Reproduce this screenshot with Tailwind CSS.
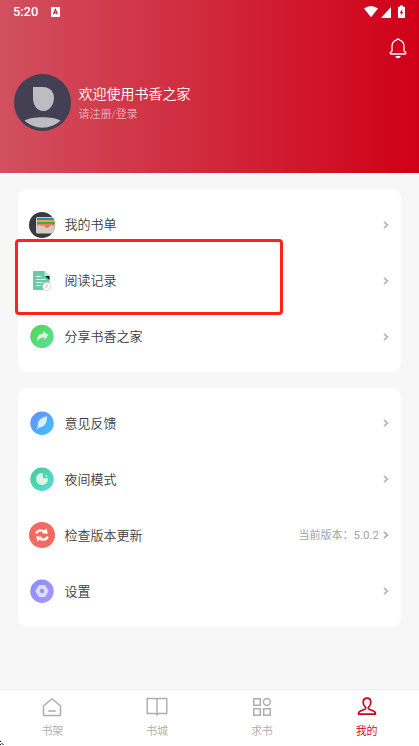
<!DOCTYPE html>
<html lang="zh-CN">
<head>
<meta charset="utf-8">
<title>书香之家</title>
<script src="https://cdn.jsdelivr.net/npm/@tailwindcss/browser@4"></script>
</head>
<body class="relative flex h-[746px] w-[419px] flex-col overflow-hidden bg-[#f7f7f7] font-['Roboto','Noto_Sans_CJK_SC',sans-serif] font-[350] text-[#3c3c40]">

<header class="h-[173px] shrink-0 bg-linear-to-r/srgb from-[#d1505f] to-[#d00018] text-white">
  <div class="flex h-[23px] items-center pl-[13px] pr-[14px]">
    <span class="w-[25.500px] text-[13px] leading-[23px] font-medium tracking-[-0.1px]">5:20</span>
    <svg class="ml-[12.500px]" width="9" height="10" viewBox="0 0 9 10"><rect width="9" height="10" rx="1" fill="#fff"/><path d="M2.300 7.300 4.400 2.500 6.500 7.300M3.100 5.800h2.700" fill="none" stroke="#b92a40" stroke-width="1.200"/></svg>
    <svg class="ml-auto" width="41" height="14" viewBox="0 0 41 14">
      <path d="M0 3.600Q7 -1.600 14 3.600L7 12.300Z" fill="#fff"/>
      <path d="M27 2v11H17Z" fill="#fff"/>
      <path d="M36 .5h3v1.200h1.500a.5.5 0 0 1 .5.5v10.300a.5.5 0 0 1-.5.5h-6a.5.5 0 0 1-.5-.5V2.200a.5.5 0 0 1 .5-.5H36Z" fill="#fff"/>
      <path d="M38.300 4 35.600 8h1.700l-.6 3 2.700-4.200h-1.700Z" fill="#d00b21"/>
    </svg>
  </div>
  <div class="flex justify-end pt-[14px] pr-[12px]">
    <svg width="18" height="23" viewBox="0 0 18 23" fill="none" stroke="#fff" stroke-width="1.300" stroke-linejoin="round">
      <path d="M7.300 3.200a1.800 1.800 0 0 1 3.400 0C13.500 4.200 15 6.500 15 9.300v4.500c.2.900 1.800.8 1.800 2.200 0 .6-.3 1-1 1H2.200c-.7 0-1-.4-1-1 0-1.400 1.600-1.300 1.800-2.200V9.300c0-2.800 1.500-5.100 4.300-6.100Z"/>
      <path d="M6.500 19h5c0 3-5 3-5 0Z" fill="#fff" stroke="none"/>
    </svg>
  </div>
  <div class="mt-[14px] flex h-[57px] items-center pl-[14px]">
    <svg width="57" height="57" viewBox="0 0 57 57"><circle cx="28.500" cy="28.500" r="28.500" fill="#434054"/><path d="M19 13h10c7 0 11 5 11 11s-4 13-10.500 13S19 31 19 24Z" fill="#bdbcc3"/><path d="M10.500 46.500C18 42 39 42 46.500 46.500 37 56 20 56 10.500 46.500Z" fill="#bdbcc3"/></svg>
    <div class="ml-[7.500px] pt-[2px]">
      <div class="text-[14px] leading-[21px]">欢迎使用书香之家</div>
      <div class="text-[11px] leading-[19px] text-white/60">请注册/登录</div>
    </div>
  </div>
</header>

<main class="flex flex-1 flex-col gap-4 px-[18px] pt-[16px] text-[13px]">
  <section class="h-[183px] rounded-[9px] bg-white pt-[8px]">
    <div class="flex h-14 items-center pl-[11px] pr-[12px]">
      <svg width="26" height="26" viewBox="0 0 26 26"><defs><clipPath id="disc"><circle cx="13" cy="13" r="13"/></clipPath></defs><g clip-path="url(#disc)"><rect width="26" height="26" fill="#393943"/><rect x="7" y="5" width="20" height="16.500" rx="1.500" fill="#d2cec6"/><path d="M8 6h18v2H8Z" fill="#3186b0"/><path d="M8 8h18v2H8Z" fill="#e3aa35"/><path d="M8 10h18v2H8Z" fill="#38ad50"/><path d="M8 12h18v1.500h-5c-.5 3.300-5.500 3.300-6 0H8Z" fill="#f7785d"/></g></svg>
      <span class="ml-[9.500px]">我的书单</span>
      <svg class="ml-auto" width="6" height="8" viewBox="0 0 6 8"><path d="m1 .8 3.500 3.200L1 7.200" fill="none" stroke="#b8b8b8" stroke-width="1.700"/></svg>
    </div>
    <div class="flex h-14 items-center pl-[11px] pr-[12px]">
      <svg width="26" height="26" viewBox="0 0 26 26"><path d="M5 3h10.500l5 5v14H5a1 1 0 0 1-1-1V4a1 1 0 0 1 1-1Z" fill="#63cda6"/><path d="m15.500 3 5 5h-5Z" fill="#b3ead5"/><path d="M16 8h4.500v4Z" fill="#101916"/><path d="M7 8.500h5M7 11.500h10M7 14.500h7M7 17.500h5" stroke="#e5faf2" stroke-width="1.100"/><circle cx="17.800" cy="18.500" r="4.200" fill="#fafafa" stroke="#c8cccc" stroke-width=".7"/><path d="M18 16v2.700l-1.500 1" fill="none" stroke="#a8b8b4" stroke-width=".8"/></svg>
      <span class="ml-[9.500px]">阅读记录</span>
      <svg class="ml-auto" width="6" height="8" viewBox="0 0 6 8"><path d="m1 .8 3.500 3.200L1 7.200" fill="none" stroke="#b8b8b8" stroke-width="1.700"/></svg>
    </div>
    <div class="flex h-14 items-center pl-[11px] pr-[12px]">
      <svg width="26" height="26" viewBox="0 0 26 26"><defs><linearGradient id="share" x2="1" y2="1"><stop stop-color="#4fd64c"/><stop offset="1" stop-color="#5fdfa5"/></linearGradient></defs><circle cx="13" cy="12.500" r="11.700" fill="url(#share)"/><path d="M14 6.800 19.300 11 15.500 16.300V13.500C12 13.300 9.600 14.800 8.200 17.500 7.700 12.500 10 9.700 14.200 9.500Z" fill="#d5f8dc"/></svg>
      <span class="ml-[9.500px]">分享书香之家</span>
      <svg class="ml-auto" width="6" height="8" viewBox="0 0 6 8"><path d="m1 .8 3.500 3.200L1 7.200" fill="none" stroke="#b8b8b8" stroke-width="1.700"/></svg>
    </div>
  </section>

  <section class="h-[239px] rounded-[9px] bg-white pt-[7px]">
    <div class="flex h-14 items-center pl-[11px] pr-[12px]">
      <svg width="26" height="26" viewBox="0 0 26 26"><defs><linearGradient id="feed" x2="1" y2="1"><stop stop-color="#648bff"/><stop offset="1" stop-color="#41c4ff"/></linearGradient></defs><circle cx="13" cy="13.200" r="11.700" fill="url(#feed)"/><path d="M18 6.500C12 7 8.500 11 8.800 15.500L7.800 20l2-2.200C15 17 18.500 13.500 18 6.500Z" fill="#d6efff"/></svg>
      <span class="ml-[9.500px] pt-[2px]">意见反馈</span>
      <svg class="ml-auto" width="6" height="8" viewBox="0 0 6 8"><path d="m1 .8 3.500 3.200L1 7.200" fill="none" stroke="#b8b8b8" stroke-width="1.700"/></svg>
    </div>
    <div class="flex h-14 items-center pl-[11px] pr-[12px]">
      <svg width="26" height="26" viewBox="0 0 26 26"><defs><linearGradient id="night" x2="1" y2="1"><stop stop-color="#40cf91"/><stop offset="1" stop-color="#61d7dc"/></linearGradient></defs><circle cx="13" cy="13.200" r="11.700" fill="url(#night)"/><path d="M13.800 7A6 6 0 1 0 19 12.300H15a1.500 1.500 0 0 1-1.200-1.500Z" fill="#d9f8e4"/><path d="m17.300 8.500.5 1.100 1.100.5-1.100.5-.5 1.100-.5-1.100-1.100-.5 1.100-.5Z" fill="#c9f5e8"/></svg>
      <span class="ml-[9.500px] pt-[2px]">夜间模式</span>
      <svg class="ml-auto" width="6" height="8" viewBox="0 0 6 8"><path d="m1 .8 3.500 3.200L1 7.200" fill="none" stroke="#b8b8b8" stroke-width="1.700"/></svg>
    </div>
    <div class="flex h-14 items-center pl-[11px] pr-[12px]">
      <svg width="26" height="26" viewBox="0 0 26 26"><circle cx="13" cy="13" r="13" fill="#f16b62"/><path d="M7 11.300C9 8 12.500 7.800 16 9.800M19 14.700C17 18 13.500 18.200 10 16.200" fill="none" stroke="#fff" stroke-width="2.300"/><path d="m17.500 6.300 1.300 5.400-6-.4ZM8.500 19.700 7.200 14.300l6 .4Z" fill="#fff"/></svg>
      <span class="ml-[9.500px] pt-[2px]">检查版本更新</span>
      <span class="ml-auto mr-[4px] pt-px text-[11px] font-normal text-[#a3a3a3]">当前版本：<span class="text-[11.500px]">5.0.2</span></span>
      <svg width="6" height="8" viewBox="0 0 6 8"><path d="m1 .8 3.500 3.200L1 7.200" fill="none" stroke="#b0b0b0" stroke-width="1.700"/></svg>
    </div>
    <div class="flex h-14 items-center pl-[11px] pr-[12px]">
      <svg width="26" height="26" viewBox="0 0 26 26"><defs><linearGradient id="set" x2="1" y2="1"><stop stop-color="#8291ff"/><stop offset="1" stop-color="#ae93ff"/></linearGradient></defs><circle cx="13" cy="13.200" r="11.700" fill="url(#set)"/><path d="M10 7.500h6l3.200 5.500-3.200 5.500h-6L6.800 13Z" fill="#dedcff" stroke="#dedcff" stroke-linejoin="round"/><circle cx="13" cy="13" r="2.200" fill="#978fff"/></svg>
      <span class="ml-[9.500px] pt-[2px]">设置</span>
      <svg class="ml-auto" width="6" height="8" viewBox="0 0 6 8"><path d="m1 .8 3.500 3.200L1 7.200" fill="none" stroke="#b8b8b8" stroke-width="1.700"/></svg>
    </div>
  </section>
</main>

<nav class="grid h-[57px] shrink-0 grid-cols-4 border-t border-[#ececec] bg-white text-[11px] leading-[16px] text-[#acacac]">
  <div class="flex flex-col items-center pt-[7px]">
    <svg width="20" height="20" viewBox="0 0 20 20" fill="none" stroke="currentColor" stroke-width="1.500" stroke-linejoin="round"><path d="M1.500 9 10 1.800 18.500 9v8.500a1 1 0 0 1-1 1h-15a1 1 0 0 1-1-1ZM6.200 14h7.600"/></svg>
    <span class="mt-[7px]">书架</span>
  </div>
  <div class="flex flex-col items-center pt-[7px]">
    <svg width="22" height="20" viewBox="0 0 22 20" fill="none" stroke="currentColor" stroke-width="1.400" stroke-linejoin="round"><path d="M1.200 1.500H9q2 0 2 1.500Q11 1.500 13 1.500h7.800v15H13q-2 0-2 1.500Q11 16.500 9 16.500H1.200ZM11 3v15"/></svg>
    <span class="mt-[7px]">书城</span>
  </div>
  <div class="flex flex-col items-center pt-[7px]">
    <svg width="20" height="20" viewBox="0 0 20 20" fill="none" stroke="currentColor" stroke-width="1.500"><rect x="1.800" y="1.800" width="6.500" height="6.500"/><circle cx="14.900" cy="5" r="3.400"/><rect x="1.800" y="11.700" width="6.500" height="6.500"/><rect x="11.700" y="11.700" width="6.500" height="6.500"/></svg>
    <span class="mt-[7px]">求书</span>
  </div>
  <div class="flex flex-col items-center pt-[7px] text-[#d00018]">
    <svg width="20" height="20" viewBox="0 0 20 20" fill="none" stroke="currentColor" stroke-width="1.700" stroke-linejoin="round"><path d="M10 1.200c2.300 0 3.800 1.600 3.800 4 0 2-.8 3.700-2.200 4.900-.7.800-.3 1.700.6 2.100l4.800 2c1 .4 1.500 1 1.500 2.900h-17c0-1.900.5-2.500 1.500-2.900l4.800-2c.9-.4 1.300-1.300.6-2.100C7 8.900 6.200 7.200 6.200 5.200c0-2.400 1.500-4 3.800-4Z"/></svg>
    <span class="mt-[7px]">我的</span>
  </div>
</nav>

<div class="absolute top-[239px] left-[15px] h-[76px] w-[268px] rounded-[4px] border-3 border-[#ff2318]"></div>
<svg class="absolute bottom-0 left-0" width="5" height="5" viewBox="0 0 5 5"><path d="M0 .5h1M1.500 2.500h1M2.500 3.500h1M0 3.500h1" stroke="#111"/></svg>
</body>
</html>
